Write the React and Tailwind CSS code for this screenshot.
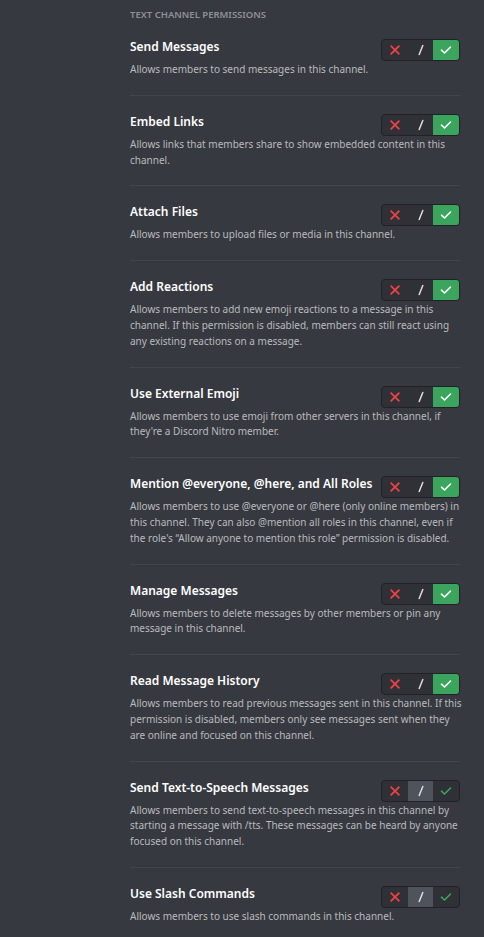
import React from "react";

const items = [
  { title: "Send Messages", lines: ["Allows members to send messages in this channel."], state: "allow" },
  { title: "Embed Links", lines: ["Allows links that members share to show embedded content in this", "channel."], state: "allow" },
  { title: "Attach Files", lines: ["Allows members to upload files or media in this channel."], state: "allow" },
  { title: "Add Reactions", lines: ["Allows members to add new emoji reactions to a message in this", "channel. If this permission is disabled, members can still react using", "any existing reactions on a message."], state: "allow" },
  { title: "Use External Emoji", lines: ["Allows members to use emoji from other servers in this channel, if", "they're a Discord Nitro member."], state: "allow" },
  { title: "Mention @everyone, @here, and All Roles", lines: ["Allows members to use @everyone or @here (only online members) in", "this channel. They can also @mention all roles in this channel, even if", "the role's \u201CAllow anyone to mention this role\u201D permission is disabled."], state: "allow" },
  { title: "Manage Messages", lines: ["Allows members to delete messages by other members or pin any", "message in this channel."], state: "allow" },
  { title: "Read Message History", lines: ["Allows members to read previous messages sent in this channel. If this", "permission is disabled, members only see messages sent when they", "are online and focused on this channel."], state: "allow" },
  { title: "Send Text-to-Speech Messages", lines: ["Allows members to send text-to-speech messages in this channel by", "starting a message with /tts. These messages can be heard by anyone", "focused on this channel."], state: "neutral" },
  { title: "Use Slash Commands", lines: ["Allows members to use slash commands in this channel."], state: "neutral" },
];

function XIcon() {
  return (
    <svg width="10" height="10" viewBox="0 0 10 10">
      <path d="M1.3 1.3 L8.7 8.7 M8.7 1.3 L1.3 8.7" stroke="#ed4245" strokeWidth="1.8" strokeLinecap="square" fill="none" />
    </svg>
  );
}

function SlashIcon() {
  return (
    <svg width="10" height="12" viewBox="0 0 10 12">
      <path d="M3.2 10.5 L6.8 1.5" stroke="#dcddde" strokeWidth="1.5" strokeLinecap="round" fill="none" />
    </svg>
  );
}

function CheckIcon({ color }) {
  return (
    <svg width="12" height="10" viewBox="0 0 12 10">
      <path d="M1.5 5.2 L4.5 8 L10.5 2" stroke={color} strokeWidth="1.6" strokeLinecap="round" strokeLinejoin="round" fill="none" />
    </svg>
  );
}

function Toggle({ state }) {
  const allow = state === "allow";
  return (
    <div className="flex h-[22px] w-[79px] shrink-0 overflow-hidden rounded-[4px] border border-[#202225] bg-[#2f3136]">
      <div className="flex flex-1 items-center justify-center">
        <XIcon />
      </div>
      <div className={`flex flex-1 items-center justify-center ${allow ? "" : "bg-[#4f545c]"}`}>
        <SlashIcon />
      </div>
      <div className={`flex flex-1 items-center justify-center ${allow ? "bg-[#3ba55d]" : ""}`}>
        <CheckIcon color={allow ? "#ffffff" : "#3ba55d"} />
      </div>
    </div>
  );
}

export default function App() {
  return (
    <div className="min-h-[937px] w-full bg-[#36393f] font-['Noto_Sans',sans-serif]">
      <div className="ml-[130px] w-[330px]">
        <div className="pt-[9px] text-[9.5px] font-semibold uppercase leading-[12px] text-[#8e9297]">
          Text Channel Permissions
        </div>
        {items.map((it, i) => (
          <div
            key={it.title}
            className={`pt-[18px] pb-[17px] ${i < items.length - 1 ? "border-b border-[#42454a]" : ""}`}
          >
            <div className="flex items-start justify-between">
              <div className="text-[12px] font-semibold leading-[16px] text-white">{it.title}</div>
              <Toggle state={it.state} />
            </div>
            <div className="mt-px text-[10px] leading-[15.8px] text-[#b9bbbe]">
              {it.lines.map((l) => (
                <div key={l} className="whitespace-nowrap">{l}</div>
              ))}
            </div>
          </div>
        ))}
      </div>
    </div>
  );
}
